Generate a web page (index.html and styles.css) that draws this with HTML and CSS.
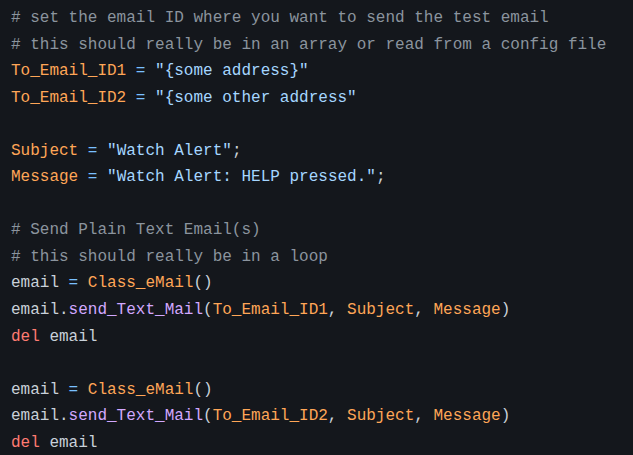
FILE: index.html
```html
<!DOCTYPE html>
<html>
<head>
<meta charset="utf-8">
<link rel="stylesheet" href="styles.css">
</head>
<body>
<pre class="code"><span class="c"># set the email ID where you want to send the test email</span>
<span class="c"># this should really be in an array or read from a config file</span>
<span class="v">To_Email_ID1</span> <span class="o">=</span> <span class="s">"{some address}"</span>
<span class="v">To_Email_ID2</span> <span class="o">=</span> <span class="s">"{some other address"</span>

<span class="v">Subject</span> <span class="o">=</span> <span class="s">"Watch Alert"</span>;
<span class="v">Message</span> <span class="o">=</span> <span class="s">"Watch Alert: HELP pressed."</span>;

<span class="c"># Send Plain Text Email(s)</span>
<span class="c"># this should really be in a loop</span>
email <span class="o">=</span> <span class="v">Class_eMail</span>()
email.<span class="f">send_Text_Mail</span>(<span class="v">To_Email_ID1</span>, <span class="v">Subject</span>, <span class="v">Message</span>)
<span class="k">del</span> email

email <span class="o">=</span> <span class="v">Class_eMail</span>()
email.<span class="f">send_Text_Mail</span>(<span class="v">To_Email_ID2</span>, <span class="v">Subject</span>, <span class="v">Message</span>)
<span class="k">del</span> email</pre>
</body>
</html>
```
FILE: styles.css
```css
html, body {
  margin: 0;
  padding: 0;
  background: #14171c;
}
.code {
  margin: 0;
  padding: 5px 11px 0;
  font-family: "Liberation Mono", monospace;
  font-size: 16px;
  line-height: 26.55px;
  color: #c9d1d9;
  background: #14171c;
  min-height: 455px;
  box-sizing: border-box;
}
.c { color: #8b949e; }
.v { color: #ffa657; }
.s { color: #a5d6ff; }
.o { color: #79c0ff; }
.f { color: #d2a8ff; }
.k { color: #ff7b72; }
```
